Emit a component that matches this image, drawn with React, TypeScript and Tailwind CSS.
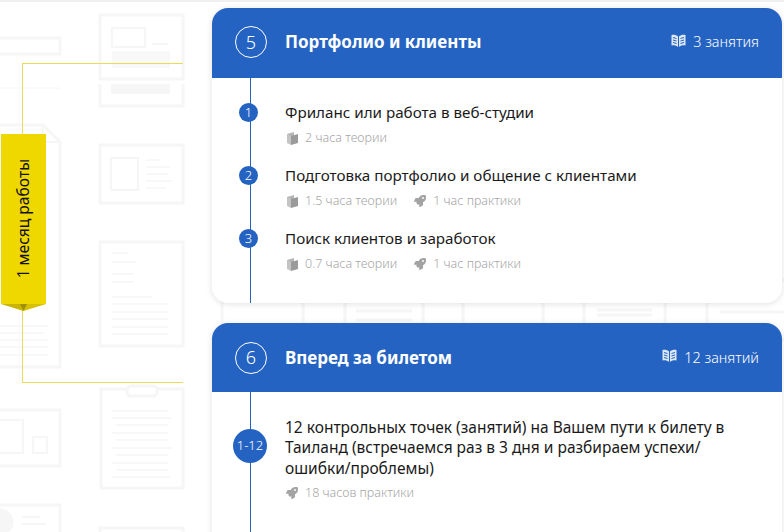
import React from 'react';
import { FaRocket } from 'react-icons/fa';

type Meta = { kind: 'theory' | 'practice'; label: string };
type Lesson = { num: string; title: string; meta: Meta[] };

const BookIcon = () => (
  <svg width="11" height="13" viewBox="0 0 11 13" className="shrink-0 ml-[2px]">
    <path d="M0 2 L7 0 L7 9 L0 11 Z" fill="#b5b5b5" />
    <path d="M0 2 L0 11 L4 13 L4 4 Z" fill="#c4c4c4" />
    <path d="M4 4 L11 2 L11 11 L4 13 Z" fill="#9a9a9a" />
  </svg>
);

const OpenBookIcon = () => (
  <svg width="15" height="14" viewBox="0 0 15 14" className="shrink-0 mt-[-2px]">
    <path d="M7 2.500 C5.500 1 3 .5 .5 1 L.5 11.500 C3 11 5.500 11.500 7 13 Z" fill="#dbe6f7" />
    <path d="M8 2.500 C9.500 1 12 .5 14.500 1 L14.500 11.500 C12 11 9.500 11.500 8 13 Z" fill="#dbe6f7" />
    <path d="M2 3.500 L5.500 4.500 M2 6 L5.500 7 M2 8.500 L5.500 9.500 M13 3.500 L9.500 4.500 M13 6 L9.500 7 M13 8.500 L9.500 9.500" stroke="#2563c2" strokeWidth="1" />
  </svg>
);

const Backdrop = () => (
  <svg
    className="absolute inset-0 w-[784px] h-[532px] blur-[0.7px]"
    viewBox="0 0 784 532"
    fill="none"
    stroke="#f6f6f6"
    strokeWidth="3"
  >
    {/* left column */}
    <rect x="-5" y="38" width="65" height="16" />
    <path d="M0 88 H60" strokeWidth="1" />
    <path d="M-5 125 H43 L60 142 V367 H-5" />
    <path d="M43 125 V142 H60" strokeWidth="2" />
    <path d="M0 326 H48 M0 333 H44 M0 340 H48 M0 347 H48 M0 355 H48" strokeWidth="1.500" />
    <rect x="-5" y="410" width="65" height="56" />
    <rect x="-5" y="420" width="28" height="33" strokeWidth="2" />
    <rect x="33" y="437" width="14" height="16" strokeWidth="2" />
    <rect x="-5" y="505" width="65" height="40" />
    <circle cx="0" cy="522" r="12" fill="#f6f6f6" />
    <path d="M22 517 H40 M22 524 H46" strokeWidth="2" />
    {/* second column */}
    <rect x="100" y="15" width="83" height="64" />
    <rect x="112" y="28" width="33" height="19" strokeWidth="2" />
    <path d="M152 44 H168" strokeWidth="2" />
    <rect x="112" y="51" width="58" height="17" fill="#f8f8f8" stroke="none" />
    <path d="M100 84 V106 H183 V84" />
    <rect x="111" y="84" width="59" height="10" fill="#f6f6f6" stroke="none" />
    <rect x="100" y="145" width="83" height="58" />
    <rect x="111" y="158" width="27" height="32" strokeWidth="2" />
    <path d="M146 160 H160 M146 167 H170 M146 174 H168 M146 181 H172 M146 188 H166" strokeWidth="1.500" />
    <rect x="100" y="242" width="83" height="104" />
    <path d="M112 253 H128 M112 262 H136 M112 274 H134 M112 282 H134 M112 297 H152 M112 304 H168 M112 312 H168 M112 319 H168 M112 327 H168 M112 334 H168" strokeWidth="1.500" />
    <rect x="101" y="389" width="82" height="99" />
    <rect x="127" y="386" width="30" height="10" rx="4" fill="#ffffff" />
    <path d="M112 411 H168 M112 418 H172 M116 425 H168 M112 433 H168 M116 440 H168 M112 448 H172 M116 455 H168 M112 463 H168 M116 470 H168 M112 477 H170" strokeWidth="1.500" />
    <rect x="100" y="528" width="83" height="20" />
    {/* columns behind the cards */}
    <rect x="222" y="280" width="81" height="60" />
    <rect x="345" y="280" width="78" height="60" />
    <path d="M356 311 H412 M356 320 H412" />
    <rect x="463" y="280" width="80" height="60" />
    <rect x="584" y="280" width="81" height="60" />
    <path d="M597 310 H652 M597 315 H652" />
    <rect x="707" y="280" width="81" height="60" />
    <path d="M720 312 H784" />
  </svg>
);

const MetaItem = ({ kind, label }: Meta) => (
  <div className="flex items-center gap-[7px]">
    {kind === 'theory' ? <BookIcon /> : <FaRocket className="text-[#a3a3a3] text-[12px] shrink-0 ml-[1px]" />}
    <span>{label}</span>
  </div>
);

const LessonRow = ({ num, title, meta }: Lesson) => (
  <div className="flex">
    <div className="w-[73px] shrink-0 flex justify-center">
      <div className="relative z-10 mt-[1px] h-[19px] w-[19px] rounded-full bg-[#2563c2] text-white text-[13px] font-light leading-[19px] text-center">
        {num}
      </div>
    </div>
    <div>
      <div className="text-[15.2px] leading-[20px] text-[#1a1a1a]">{title}</div>
      <div className="mt-[8px] flex gap-[16px] text-[12.5px] font-light leading-[16px] text-[#a6a6a6]">
        {meta.map((m) => (
          <MetaItem key={m.label} {...m} />
        ))}
      </div>
    </div>
  </div>
);

const CardHeader = ({ num, title, count, height }: { num: string; title: string; count: string; height: string }) => (
  <div className={`bg-[#2563c2] text-white flex items-center pl-[23px] pr-[23px] ${height}`}>
    <div className="w-[32px] h-[32px] rounded-full border border-white flex items-center justify-center text-[18px] font-light shrink-0">
      {num}
    </div>
    <div className="ml-[18px] text-[17px] font-bold flex-1">{title}</div>
    <div className="flex items-center gap-[7px] text-[14.4px] font-light">
      <OpenBookIcon />
      <span>{count}</span>
    </div>
  </div>
);

const App: React.FC = () => {
  const lessons: Lesson[] = [
    { num: '1', title: 'Фриланс или работа в веб-студии', meta: [{ kind: 'theory', label: '2 часа теории' }] },
    {
      num: '2',
      title: 'Подготовка портфолио и общение с клиентами',
      meta: [
        { kind: 'theory', label: '1.5 часа теории' },
        { kind: 'practice', label: '1 час практики' },
      ],
    },
    {
      num: '3',
      title: 'Поиск клиентов и заработок',
      meta: [
        { kind: 'theory', label: '0.7 часа теории' },
        { kind: 'practice', label: '1 час практики' },
      ],
    },
  ];

  return (
    <div className="relative w-[784px] h-[532px] overflow-hidden bg-white flex font-['Noto_Sans',sans-serif]">
      <Backdrop />
      <div className="absolute top-0 left-0 right-0 h-[2px] bg-[#f0f0f0]" />

      {/* Left bracket */}
      <div className="relative w-[212px] shrink-0 pl-[22px] pt-[63px]">
        <div className="w-[161px] h-[320px] border border-r-0 border-[#eedb55] flex items-center">
          <div className="relative ml-[-22px] mt-[-2px] w-[45px] h-[177px]">
            <div className="w-[45px] h-[170px] bg-[#efd700] flex items-center justify-center">
              <span className="-rotate-90 whitespace-nowrap text-[15.6px] text-[#111111]">1 месяц работы</span>
            </div>
            <svg width="45" height="7" viewBox="0 0 45 7" className="block">
              <path d="M0 0 L22.500 7 L22.500 0 Z" fill="#c9b500" />
              <path d="M45 0 L22.500 7 L22.500 0 Z" fill="#d6c100" />
              <path d="M19 0 L22.500 7 L26 0 Z" fill="#a09000" />
            </svg>
          </div>
        </div>
      </div>

      {/* Cards */}
      <div className="relative w-[570px] pt-[8px] flex flex-col gap-[20px]">
        <div className="rounded-[16px] overflow-hidden bg-white shadow-[0_1px_6px_rgba(0,0,0,0.12)] h-[295px] shrink-0 relative">
          <div className="absolute left-[38px] top-[70px] bottom-0 w-px bg-[#2563c2]" />
          <CardHeader num="5" title="Портфолио и клиенты" count="3 занятия" height="h-[70px] pb-[2px]" />
          <div className="pt-[24px] flex flex-col gap-[19px]">
            {lessons.map((l) => (
              <LessonRow key={l.num} {...l} />
            ))}
          </div>
        </div>

        <div className="rounded-[16px] overflow-hidden bg-white shadow-[0_1px_6px_rgba(0,0,0,0.12)] h-[230px] shrink-0 relative">
          <div className="absolute left-[38px] top-[69px] bottom-0 w-px bg-[#2563c2]" />
          <CardHeader num="6" title="Вперед за билетом" count="12 занятий" height="h-[69px]" />
          <div className="pt-[25px] flex">
            <div className="w-[73px] shrink-0 flex justify-center">
              <div className="relative z-10 mt-[12px] ml-[3px] w-[34px] h-[34px] rounded-full bg-[#2563c2] text-white text-[13px] font-light flex items-center justify-center">
                1-12
              </div>
            </div>
            <div className="w-[450px]">
              <div className="text-[15.5px] leading-[20.400px] text-[#1a1a1a]">
                12 контрольных точек (занятий) на Вашем пути к билету в Таиланд (встречаемся раз в 3 дня и разбираем успехи/ ошибки/проблемы)
              </div>
              <div className="mt-[7px] text-[12.5px] font-light leading-[16px] text-[#a6a6a6]">
                <MetaItem kind="practice" label="18 часов практики" />
              </div>
            </div>
          </div>
        </div>
      </div>
    </div>
  );
};

export default App;
